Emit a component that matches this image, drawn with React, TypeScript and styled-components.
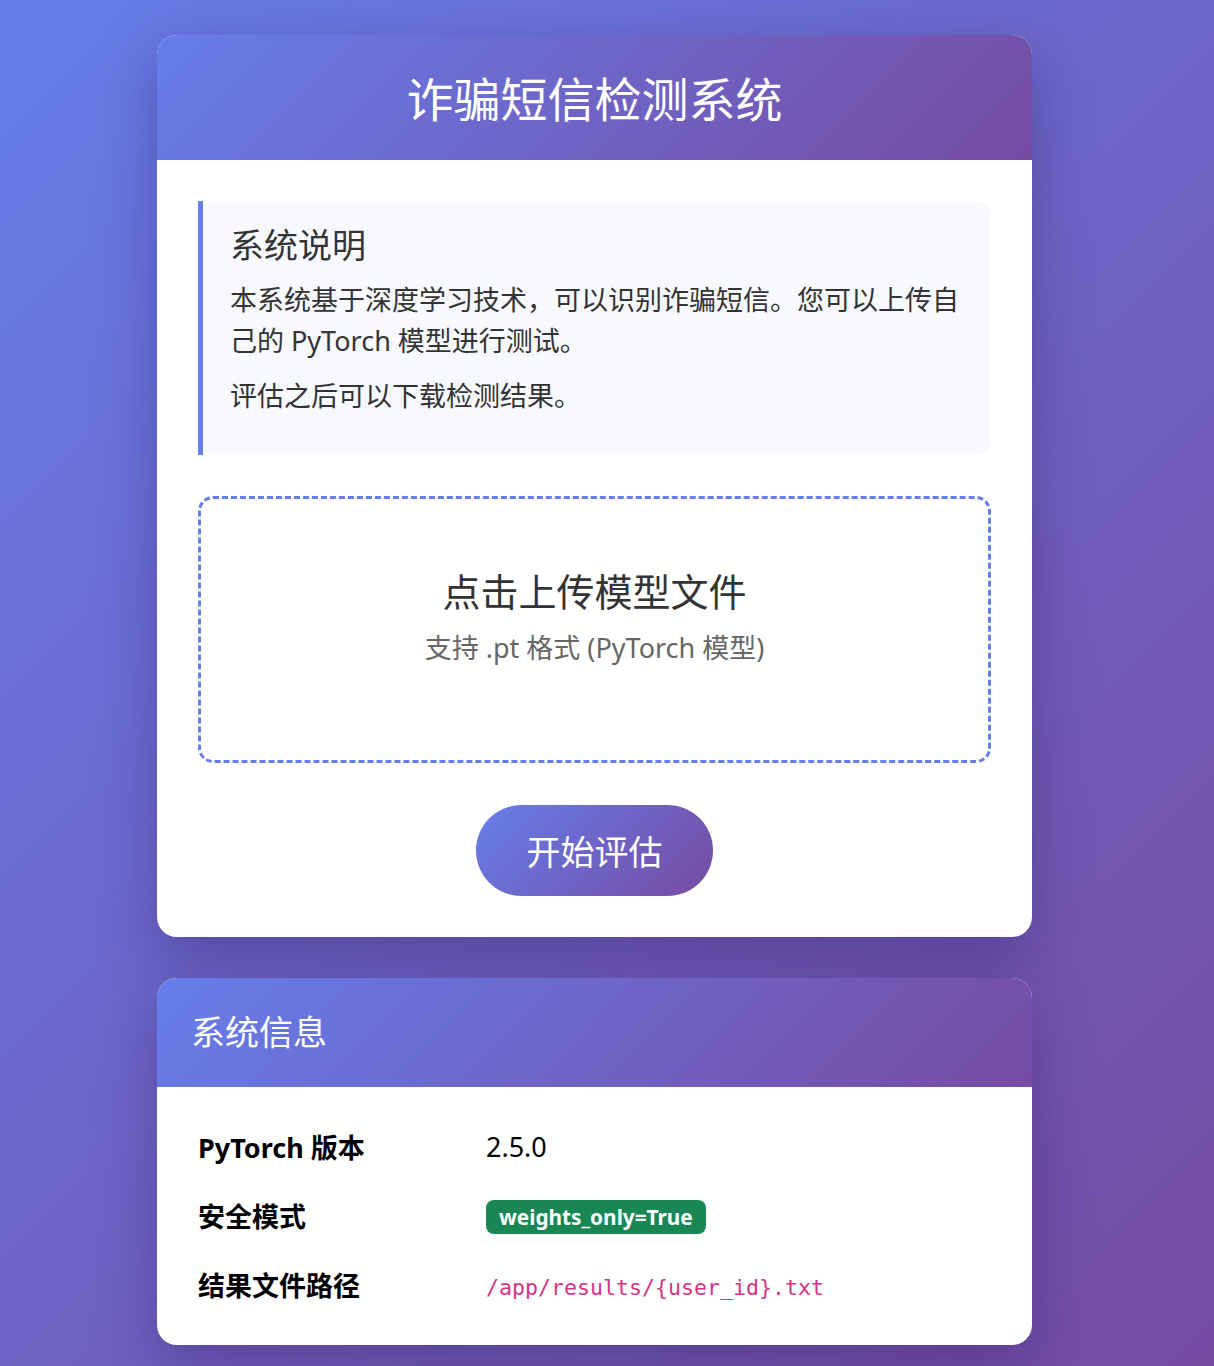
import React from "react";
import styled, { createGlobalStyle } from "styled-components";

const GlobalStyle = createGlobalStyle`
  html, body {
    margin: 0;
    padding: 0;
  }
  body {
    min-height: 100vh;
    background: linear-gradient(135deg, #667eea 0%, #764ba2 100%);
    background-attachment: fixed;
    font-family: "Noto Sans", "Noto Sans CJK SC", sans-serif;
    color: #212529;
  }
`;

const Page = styled.div`
  padding: 35px 25px 36px 0;
  display: flex;
  flex-direction: column;
  align-items: center;
  gap: 41px;
`;

const Card = styled.section`
  width: 875px;
  background: #fff;
  border-radius: 20px;
  overflow: hidden;
  box-shadow: 0 20px 60px rgba(40, 20, 90, 0.35);
`;

const CardHeader = styled.header<{ $center?: boolean; $height: number }>`
  height: ${(p) => p.$height}px;
  box-sizing: border-box;
  display: flex;
  align-items: center;
  justify-content: ${(p) => (p.$center ? "center" : "flex-start")};
  padding: 0 34px;
  background: linear-gradient(135deg, #667eea 0%, #764ba2 100%);
  color: #fff;
`;

const Title = styled.h1`
  margin: 4px 0 0;
  font-size: 47px;
  font-weight: 400;
  line-height: 1.2;
`;

const SubTitle = styled.h2`
  margin: 0;
  font-size: 34px;
  font-weight: 400;
  line-height: 1.2;
`;

const CardBody = styled.div`
  padding: 41px;
  display: flex;
  flex-direction: column;
  align-items: stretch;
`;

const InfoBox = styled.div`
  background: #f8f9ff;
  border-left: 5px solid #667eea;
  border-radius: 0 15px 15px 0;
  padding: 24px 27px 25px 27px;
  color: #333;
`;

const InfoHeading = styled.h3`
  margin: 0 0 13px;
  font-size: 34px;
  font-weight: 400;
  line-height: 1.2;
  color: #333;
`;

const InfoText = styled.p`
  margin: 0 0 14px;
  font-size: 27px;
  line-height: 41px;
  color: #333;
`;

const UploadArea = styled.div`
  margin-top: 41px;
  border: 3px dashed #667eea;
  border-radius: 15px;
  padding: 69px 20px 92px;
  display: flex;
  flex-direction: column;
  align-items: center;
  text-align: center;
  cursor: pointer;
`;

const UploadTitle = styled.div`
  font-size: 38px;
  line-height: 46px;
  color: #333;
  margin-bottom: 13px;
`;

const UploadHint = styled.div`
  font-size: 27px;
  line-height: 41px;
  color: #666;
`;

const ButtonRow = styled.div`
  margin-top: 42px;
  display: flex;
  justify-content: center;
`;

const StartButton = styled.button`
  width: 237px;
  height: 91px;
  border: none;
  border-radius: 46px;
  background: linear-gradient(135deg, #667eea 0%, #764ba2 100%);
  color: #fff;
  font-family: "Noto Sans", "Noto Sans CJK SC", sans-serif;
  font-size: 34px;
  cursor: pointer;
`;

const InfoTable = styled.div`
  padding: 25px 41px 26px;
  display: grid;
  grid-template-columns: 288px 1fr;
  grid-auto-rows: 69px;
  align-items: center;
`;

const Label = styled.div`
  font-size: 27px;
  font-weight: 700;
  color: #000;
`;

const Value = styled.div`
  font-size: 27px;
  color: #000;
`;

const Badge = styled.span`
  display: inline-block;
  background: #198754;
  color: #fff;
  font-size: 20.8px;
  font-weight: 700;
  line-height: 34px;
  padding: 0 13px;
  border-radius: 8px;
`;

const Code = styled.code`
  font-family: "DejaVu Sans Mono", "Liberation Mono", monospace;
  font-size: 21.6px;
  color: #d63384;
`;

export default function App() {
  return (
    <>
      <GlobalStyle />
      <Page>
        <Card>
          <CardHeader $center $height={125}>
            <Title>诈骗短信检测系统</Title>
          </CardHeader>
          <CardBody>
            <InfoBox>
              <InfoHeading>系统说明</InfoHeading>
              <InfoText>
                本系统基于深度学习技术，可以识别诈骗短信。您可以上传自己的 PyTorch 模型进行测试。
              </InfoText>
              <InfoText>评估之后可以下载检测结果。</InfoText>
            </InfoBox>
            <UploadArea>
              <UploadTitle>点击上传模型文件</UploadTitle>
              <UploadHint>支持 .pt 格式 (PyTorch 模型)</UploadHint>
            </UploadArea>
            <ButtonRow>
              <StartButton>开始评估</StartButton>
            </ButtonRow>
          </CardBody>
        </Card>
        <Card>
          <CardHeader $height={109}>
            <SubTitle>系统信息</SubTitle>
          </CardHeader>
          <InfoTable>
            <Label>PyTorch 版本</Label>
            <Value>2.5.0</Value>
            <Label>安全模式</Label>
            <Value>
              <Badge>weights_only=True</Badge>
            </Value>
            <Label>结果文件路径</Label>
            <Value>
              <Code>/app/results/{"{user_id}"}.txt</Code>
            </Value>
          </InfoTable>
        </Card>
      </Page>
    </>
  );
}
